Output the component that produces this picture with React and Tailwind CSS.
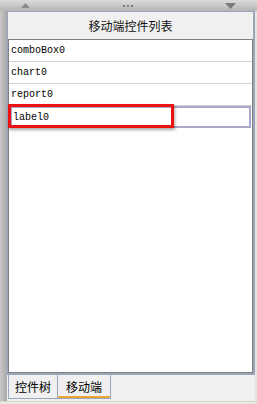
import React from 'react';

const items = ['comboBox0', 'chart0', 'report0', 'label0'];

const cjk = { fontFamily: '"Noto Sans CJK SC", "Noto Sans", sans-serif' };
const mono = { fontFamily: '"Liberation Mono", "DejaVu Sans Mono", monospace' };

const App = () => {
  return (
    <div className="w-[257px] h-[404px] bg-[#f0f0f0] flex flex-col overflow-hidden">
      {/* splitter bar */}
      <div className="h-[11px] shrink-0 flex items-center justify-between px-[21px] bg-gradient-to-b from-[#dcdcdc] to-[#b4b4b4]">
        <svg width="9" height="5" viewBox="0 0 9 5"><path d="M0 5 L4.5 0 L9 5 Z" fill="#8a8a8a" /></svg>
        <div className="flex gap-[2px]">
          <span className="w-[2px] h-[2px] bg-[#7a7a7a]" />
          <span className="w-[2px] h-[2px] bg-[#7a7a7a]" />
          <span className="w-[2px] h-[2px] bg-[#7a7a7a]" />
        </div>
        <svg width="11" height="6" viewBox="0 0 11 6"><path d="M0 0 L5.5 6 L11 0 Z" fill="#7a7a7a" /></svg>
      </div>

      <div className="flex flex-1 min-h-0">
        <div className="w-[7px] shrink-0 bg-gradient-to-r from-[#c8c8c8] to-[#a8a8a8]" />

        <div className="flex-1 flex flex-col min-w-0">
          <div className="flex-1 flex flex-col border border-[#9aa6bc] border-b-2 border-r-2 min-h-0">
            <div className="h-[27px] shrink-0 flex items-center justify-center text-[12px] text-[#111]" style={cjk}>
              移动端控件列表
            </div>
            <div className="flex-1 bg-white border-t border-l border-r border-b border-[#808080] relative">
              {items.map((it, i) => (
                <div
                  key={it}
                  className={
                    i === items.length - 1
                      ? 'h-[22px] flex items-center pl-[1px] ml-[1px] mr-[1px] border-2 border-[#a9a9cc] text-[10px] text-black'
                      : 'h-[22px] flex items-center pl-[2px] border-b border-[#d4d0c8] text-[10px] text-black'
                  }
                  style={mono}
                >
                  {it}
                </div>
              ))}
              <div className="absolute left-[-1px] top-[64px] w-[166px] h-[24px] border-[3px] border-[#ee1111] shadow-[1px_2px_3px_rgba(0,0,0,0.35)]" />
            </div>
          </div>

          <div className="h-[26px] shrink-0 flex items-start pl-[1px]">
            <div className="h-[24px] w-[50px] flex items-center justify-center border border-t-0 border-[#9aa6bc] text-[12px] text-black" style={cjk}>
              控件树
            </div>
            <div className="h-[24px] w-[53px] flex flex-col items-center justify-end border border-t-0 border-l-0 border-[#9aa6bc] text-[12px] text-black" style={cjk}>
              <span className="leading-[18px]">移动端</span>
              <span className="h-[2px] w-full rounded-full bg-[#eaa431]" />
            </div>
          </div>
        </div>

        <div className="w-[2px] shrink-0 bg-[#e4e4e4]" />
      </div>
      <div className="h-[3px] shrink-0 bg-[#ebe8e0] border-t border-[#d8d4c8]" />
    </div>
  );
};

export default App;
